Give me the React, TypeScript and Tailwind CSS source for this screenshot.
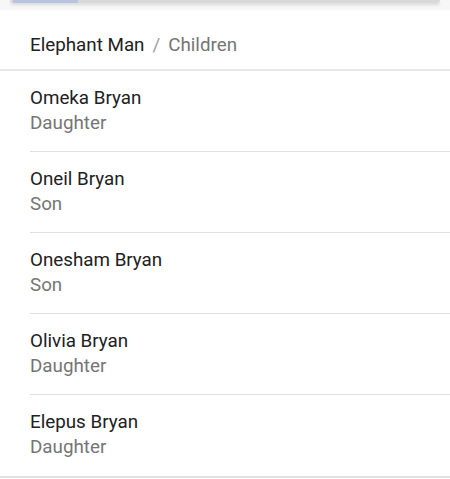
const children = [
  { name: 'Omeka Bryan', relation: 'Daughter' },
  { name: 'Oneil Bryan', relation: 'Son' },
  { name: 'Onesham Bryan', relation: 'Son' },
  { name: 'Olivia Bryan', relation: 'Daughter' },
  { name: 'Elepus Bryan', relation: 'Daughter' },
];

export default function App() {
  return (
    <div className="w-[450px] min-h-[479px] bg-white font-['Roboto',sans-serif]">
      {/* top strip */}
      <div className="h-[10px] bg-[#f7f7f7]">
        <div className="mx-[10px] h-[3px] bg-[#d9d9d9] shadow-[0_2px_3px_rgba(0,0,0,0.12)] rounded-b-sm flex">
          <div className="ml-[3px] w-[65px] h-full bg-[#b9c3dc]" />
        </div>
      </div>

      {/* breadcrumb */}
      <div className="h-[61px] flex items-center pt-[11px] px-[30px] border-b-2 border-[#e8e8e8] text-[18.8px]">
        <span className="text-[#212121]">Elephant Man</span>
        <span className="mx-[8px] text-[#9e9e9e]">/</span>
        <span className="text-[#757575]">Children</span>
      </div>

      {/* list */}
      <ul>
        {children.map((c, i) => (
          <li key={c.name} className="pl-[30px]">
            <div
              className={`h-[81px] pt-[15px] ${
                i === children.length - 1 ? '' : 'border-b border-[#e0e0e0]'
              }`}
            >
              <div className="text-[18.8px] leading-[24px] text-[#212121]">{c.name}</div>
              <div className="text-[18.8px] leading-[24px] mt-[1px] text-[#757575]">{c.relation}</div>
            </div>
          </li>
        ))}
      </ul>
      <div className="h-[2px] bg-[#e0e0e0]" />
    </div>
  );
}
